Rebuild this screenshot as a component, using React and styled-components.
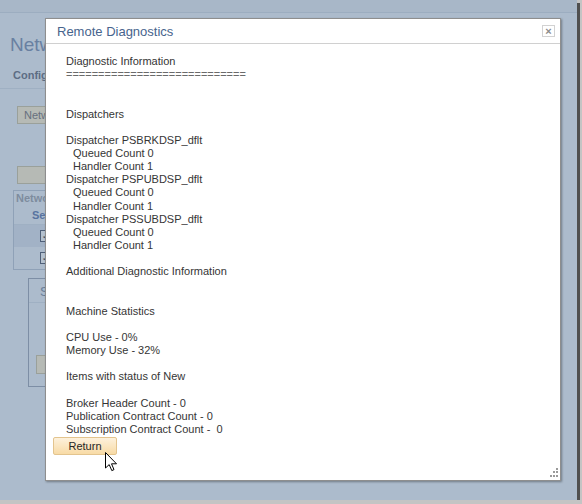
import React from 'react';
import styled, { createGlobalStyle } from 'styled-components';

const GlobalStyle = createGlobalStyle`
    body {
        margin: 0;
        background: #c4c4c4;
        font-family: "Liberation Sans", Arial, sans-serif;
    }
`;

const Frame = styled.div`
    position: relative;
    width: 577px;
    height: 500px;
    background: #acbbcc;
    box-shadow: 3px 3px 0 #4f4f4f;
    overflow: hidden;
`;

const TopStrip = styled.div`
    height: 12px;
    background: #a8b7c8;
    border-bottom: 1px solid #9cadc0;
`;

// what shows of the page left of the dialog
const PageColumn = styled.div`
    width: 46px;
    overflow: hidden;
`;

const PageTitle = styled.div`
    margin: 22px 0 0 10px;
    font-size: 19px;
    line-height: 20px;
    color: #6980a1;
    white-space: nowrap;
`;

const TabRow = styled.div`
    margin: 14px 0 0 0;
    padding: 0 0 6px 13px;
    border-bottom: 1px solid #9fb0c3;
    font-size: 11px;
    line-height: 13px;
    font-weight: 700;
    color: #5d6d84;
    white-space: nowrap;
`;

const PageButton = styled.div`
    margin: ${p => p.$top}px 0 0 17px;
    width: 120px;
    height: 16px;
    border: 1px solid #9aa09a;
    background: #b6bab5;
    color: #66707e;
    font-size: 11px;
    line-height: 16px;
    padding-left: 6px;
    white-space: nowrap;
`;

const Grid = styled.div`
    margin: 6px 0 0 13px;
    width: 200px;
    border: 1px solid #8fa1b7;
`;

const GridCaption = styled.div`
    height: 15px;
    padding-left: 2px;
    font-size: 11px;
    line-height: 15px;
    color: #7e8c9e;
    font-weight: 700;
    white-space: nowrap;
`;

const GridHead = styled.div`
    height: 18px;
    padding-left: 18px;
    font-size: 11px;
    line-height: 18px;
    font-weight: 700;
    color: #5873a0;
    border-bottom: 1px solid #9fb0c3;
`;

const GridRow = styled.div`
    height: 22px;
    display: flex;
    align-items: center;
    padding-left: 26px;
    background: ${p => (p.$shade ? '#a2b2c6' : '#acbbcc')};
`;

const Check = styled.div`
    width: 9px;
    height: 10px;
    border: 1px solid #4f6079;
    background: #b4c1cf;
    color: #3f4f66;
    font-size: 9px;
    line-height: 10px;
    text-align: center;
`;

const SubBox = styled.div`
    margin: 8px 0 0 28px;
    width: 200px;
    height: 107px;
    border: 1px solid #7d8ea5;
`;

const SubBoxHead = styled.div`
    height: 23px;
    padding-left: 11px;
    font-size: 13px;
    line-height: 26px;
    color: #6a7e98;
    border-bottom: 1px solid #9fb0c3;
`;

const SubBoxButton = styled.div`
    margin: 52px 0 0 7px;
    width: 60px;
    height: 17px;
    border: 1px solid #9aa09a;
    background: #b6bab5;
`;

const Modal = styled.div`
    position: absolute;
    left: 45px;
    top: 18px;
    width: 514px;
    height: 461px;
    background: #fff;
    border: 1px solid #8e8e8e;
    box-shadow: 1px 1px 2px rgba(0, 0, 0, 0.35);
    display: flex;
    flex-direction: column;
`;

const ModalHeader = styled.div`
    height: 24px;
    border-bottom: 1px solid #d0d0d0;
    display: flex;
    align-items: center;
    justify-content: space-between;
    padding: 0 5px 0 11px;
`;

const ModalTitle = styled.div`
    font-size: 13px;
    color: #47648d;
`;

const CloseButton = styled.div`
    width: 11px;
    height: 10px;
    border: 1px solid #d2d2d2;
    display: flex;
    align-items: center;
    justify-content: center;
    font-size: 11px;
    line-height: 10px;
    font-weight: 700;
    color: #8a8a8a;
    margin-top: -1px;
`;

const ModalBody = styled.div`
    padding: 11px 0 0 20px;
    font-size: 11px;
    line-height: 13px;
    color: #353535;
`;

const Line = styled.div`
    height: 13.15px;
    white-space: pre;
    padding-left: ${p => (p.$indent ? '7px' : '0')};
`;

const Rule = styled(Line)`
    color: #6a6a6a;
`;

const ReturnButton = styled.button`
    margin: 1px 0 0 7px;
    width: 64px;
    height: 18px;
    padding: 0;
    border: 1px solid #e3c48e;
    border-radius: 2px;
    background: linear-gradient(#fdf1dc, #f8dba6);
    font-family: "Liberation Sans", Arial, sans-serif;
    font-size: 11px;
    color: #262626;
`;

const Grip = styled.svg`
    position: absolute;
    right: 1px;
    bottom: 2px;
`;

const Cursor = styled.svg`
    position: absolute;
    left: 105px;
    top: 452px;
`;

const lines = [
    { t: 'Diagnostic Information' },
    { t: '============================', rule: true },
    { t: '' },
    { t: '' },
    { t: 'Dispatchers' },
    { t: '' },
    { t: 'Dispatcher PSBRKDSP_dflt' },
    { t: 'Queued Count 0', i: true },
    { t: 'Handler Count 1', i: true },
    { t: 'Dispatcher PSPUBDSP_dflt' },
    { t: 'Queued Count 0', i: true },
    { t: 'Handler Count 1', i: true },
    { t: 'Dispatcher PSSUBDSP_dflt' },
    { t: 'Queued Count 0', i: true },
    { t: 'Handler Count 1', i: true },
    { t: '' },
    { t: 'Additional Diagnostic Information' },
    { t: '' },
    { t: '' },
    { t: 'Machine Statistics' },
    { t: '' },
    { t: 'CPU Use - 0%' },
    { t: 'Memory Use - 32%' },
    { t: '' },
    { t: 'Items with status of New' },
    { t: '' },
    { t: 'Broker Header Count - 0' },
    { t: 'Publication Contract Count - 0' },
    { t: 'Subscription Contract Count -  0' },
];

const App = () => {
    return (
        <>
            <GlobalStyle />
            <Frame>
                <TopStrip />
                <PageColumn>
                    <PageTitle>Network Status</PageTitle>
                    <TabRow>Configuration</TabRow>
                    <PageButton $top={17}>Network Status</PageButton>
                    <PageButton $top={42} />
                    <Grid>
                        <GridCaption>Network Nodes</GridCaption>
                        <GridHead>Select</GridHead>
                        <GridRow $shade><Check>✓</Check></GridRow>
                        <GridRow><Check>✓</Check></GridRow>
                    </Grid>
                    <SubBox>
                        <SubBoxHead>Status</SubBoxHead>
                        <SubBoxButton />
                    </SubBox>
                </PageColumn>

                <Modal>
                    <ModalHeader>
                        <ModalTitle>Remote Diagnostics</ModalTitle>
                        <CloseButton>×</CloseButton>
                    </ModalHeader>
                    <ModalBody>
                        {lines.map((l, n) =>
                            l.rule
                                ? <Rule key={n}>{l.t}</Rule>
                                : <Line key={n} $indent={l.i}>{l.t}</Line>
                        )}
                    </ModalBody>
                    <div>
                        <ReturnButton>Return</ReturnButton>
                    </div>
                    <Grip width="10" height="10" viewBox="0 0 10 10">
                        <g fill="#9a9a9a">
                            <rect x="7" y="0" width="2" height="2" />
                            <rect x="4" y="3" width="2" height="2" />
                            <rect x="7" y="3" width="2" height="2" />
                            <rect x="1" y="7" width="2" height="2" />
                            <rect x="4" y="7" width="2" height="2" />
                            <rect x="7" y="7" width="2" height="2" />
                        </g>
                    </Grip>
                </Modal>

                <Cursor width="13" height="20" viewBox="0 0 13 20">
                    <path
                        d="M0.5 0.5 L0.5 16 L4.2 12.6 L6.8 18.6 L9 17.6 L6.5 11.8 L11.5 11.8 Z"
                        fill="#fff"
                        stroke="#000"
                        strokeWidth="1"
                    />
                </Cursor>
            </Frame>
        </>
    );
};

export default App;
